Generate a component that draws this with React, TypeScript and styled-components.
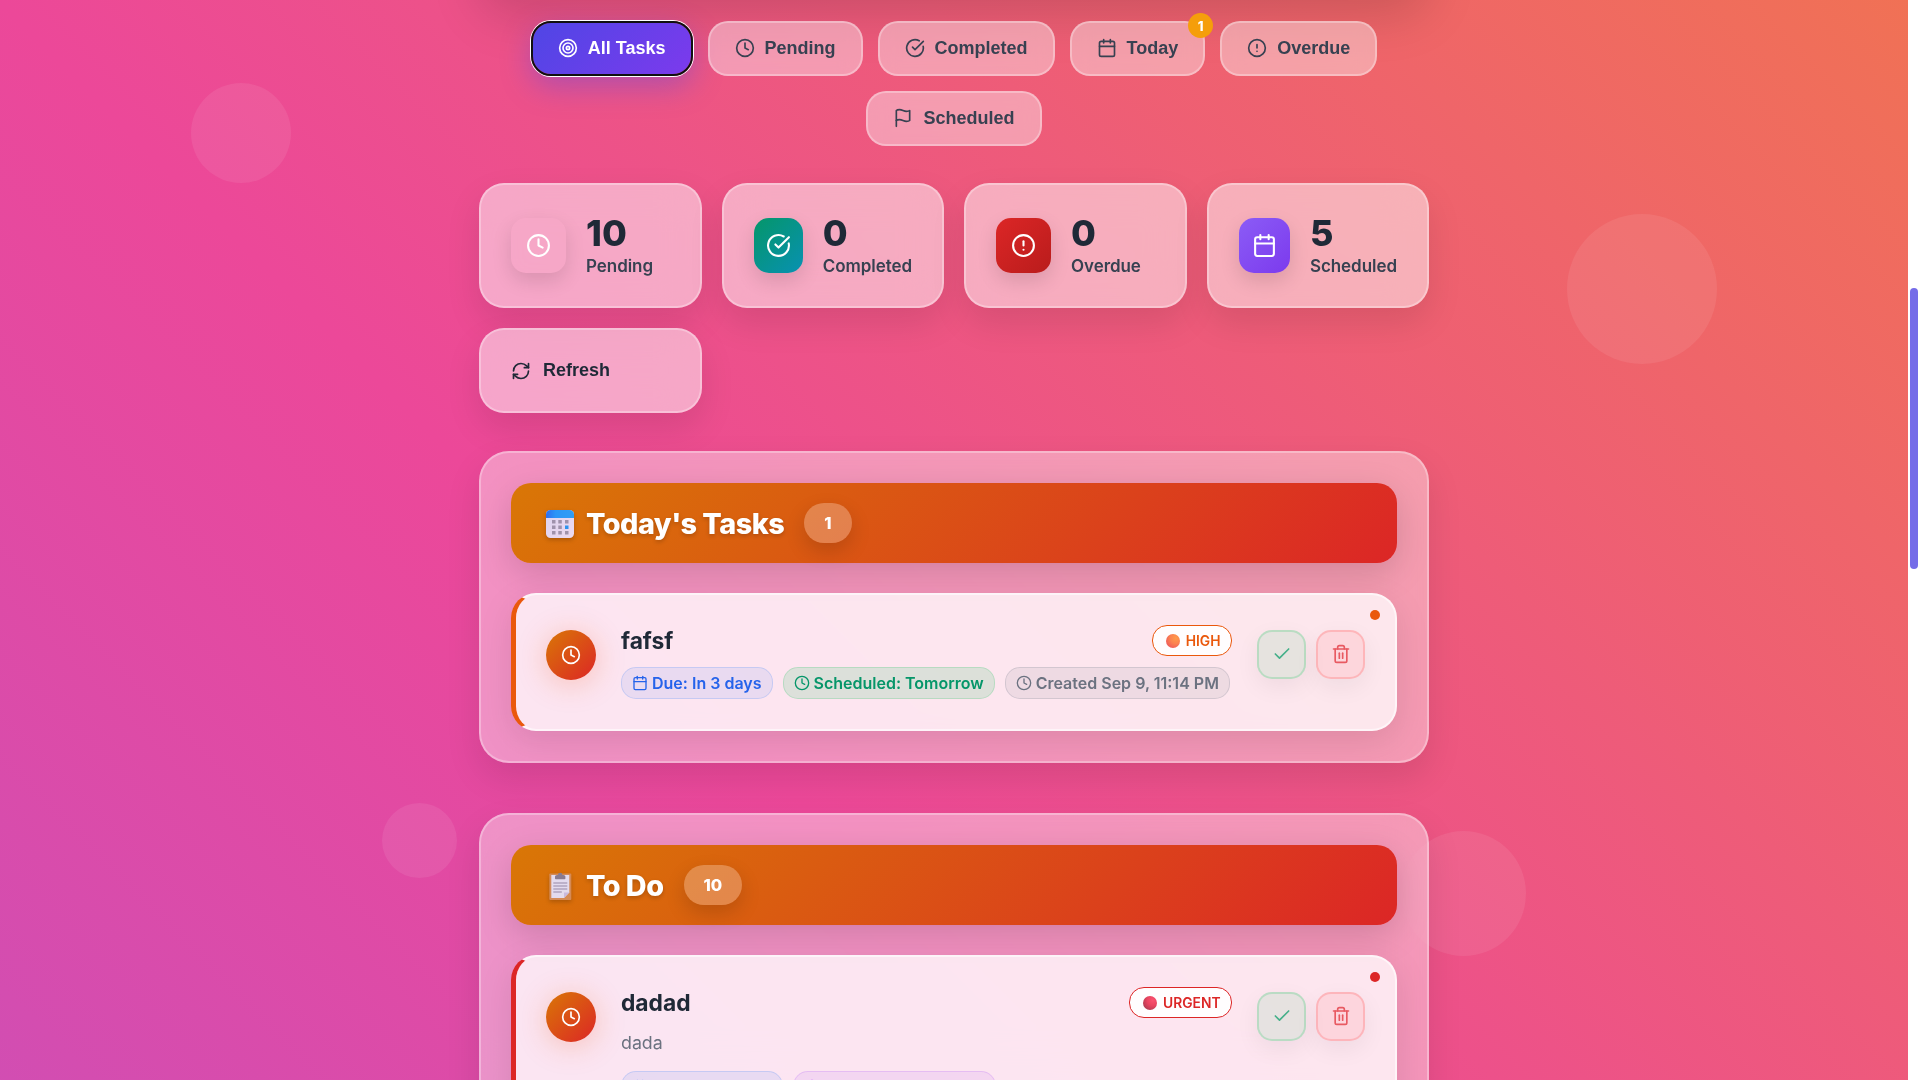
import React from "react";
import styled, { createGlobalStyle, css } from "styled-components";
import {
  Calendar,
  Check,
  CircleAlert,
  CircleCheckBig,
  Clock,
  RefreshCw,
  Target,
  Trash2,
} from "lucide-react";

const GlobalStyle = createGlobalStyle`
  *, *::before, *::after { box-sizing: border-box; }
  html, body { margin: 0; padding: 0; height: 1080px; overflow: hidden; background: #fff; }
  body { font-family: Inter, "Noto Sans", sans-serif; line-height: 1.6; color: #1f2937; }
  svg { display: block; flex: none; }
`;

const Viewport = styled.div`
  display: grid;
  grid-template-columns: 1fr 12px;
  width: 1920px;
  height: 1080px;
  overflow: hidden;
`;

const Scene = styled.div`
  position: relative;
  height: 1080px;
  overflow: hidden;
  display: flex;
  justify-content: center;
  background: linear-gradient(
    45deg,
    #8b5cf6 -97.2%,
    #ec4899 36.1%,
    #f59e0b 169.5%
  );
`;

const Bubble = styled.div<{ $x: number; $y: number; $size: number }>`
  position: absolute;
  left: ${(p) => p.$x}px;
  top: ${(p) => p.$y}px;
  width: ${(p) => p.$size}px;
  height: ${(p) => p.$size}px;
  border-radius: 50%;
  background: rgba(255, 255, 255, 0.08);
`;

const Container = styled.main`
  position: relative;
  width: 950px;
  display: flex;
  flex-direction: column;
`;

const FormPanel = styled.div`
  flex: none;
  height: 160px;
  margin-top: -169px;
  margin-bottom: 30px;
  border-radius: 30px;
  box-shadow: 0 25px 50px rgba(0, 0, 0, 0.15);
`;

const Filters = styled.nav`
  display: flex;
  flex-wrap: wrap;
  justify-content: center;
  gap: 15px;
  padding: 0 30px;
  margin-bottom: 37px;
`;

const FilterButton = styled.button<{ $active?: boolean }>`
  position: relative;
  display: flex;
  align-items: center;
  gap: 10px;
  height: 55px;
  padding: 0 25px 1px;
  border: 2px solid rgba(255, 255, 255, 0.3);
  border-radius: 20px;
  background: rgba(255, 255, 255, 0.4);
  backdrop-filter: blur(10px);
  font: 600 18px "Liberation Sans", Arial, sans-serif;
  color: #374151;
  white-space: nowrap;
  ${(p) =>
    p.$active &&
    css`
      border-color: #101010;
      background: linear-gradient(135deg, #4f46e5, #7c3aed) padding-box;
      box-shadow: 0 0 0 1px #fff, 0 10px 30px rgba(79, 70, 229, 0.4);
      color: #fff;
    `}
`;

const FilterCount = styled.span`
  position: absolute;
  top: -10px;
  right: -10px;
  width: 25px;
  height: 25px;
  display: flex;
  align-items: center;
  justify-content: center;
  border-radius: 50%;
  background: #f59e0b;
  font: 800 13px Inter, "Noto Sans", sans-serif;
  color: #fff;
`;

const Stats = styled.section`
  display: grid;
  grid-template-columns: 223px 222px 223px 222px;
  gap: 20px;
  margin-bottom: 38px;
`;

const glass = css`
  border: 2px solid rgba(255, 255, 255, 0.3);
  box-shadow: 0 15px 35px rgba(0, 0, 0, 0.1);
  backdrop-filter: blur(20px);
`;

const StatCard = styled.div`
  ${glass}
  display: flex;
  align-items: center;
  gap: 20px;
  height: 125px;
  padding: 0 30px;
  border-radius: 25px;
  background: rgba(255, 255, 255, 0.5);
`;

const StatIcon = styled.div<{ $bg: string }>`
  width: 55px;
  height: 55px;
  flex-shrink: 1;
  display: flex;
  align-items: center;
  justify-content: center;
  border-radius: 15px;
  background: ${(p) => p.$bg};
  box-shadow: 0 8px 20px rgba(0, 0, 0, 0.12);
  color: #fff;
`;

const StatText = styled.div`
  flex: none;
  padding-top: 5px;
`;

const StatNumber = styled.div`
  margin-bottom: 1.5px;
  font-size: 36px;
  font-weight: 800;
  line-height: 35.2px;
  color: #1f2937;
`;

const StatLabel = styled.div`
  font-size: 17px;
  font-weight: 600;
  line-height: 28px;
  letter-spacing: -0.05px;
  color: #374151;
`;

const RefreshButton = styled.button`
  ${glass}
  display: flex;
  align-items: center;
  gap: 12px;
  height: 85px;
  padding: 0 30px;
  border-radius: 25px;
  background: rgba(255, 255, 255, 0.5);
  font: 600 18px "Liberation Sans", Arial, sans-serif;
  color: #1f2937;
`;

const Section = styled.section`
  ${glass}
  padding: 30px;
  margin-bottom: 50px;
  border-radius: 30px;
  background: rgba(255, 255, 255, 0.4);
`;

const SectionHeader = styled.header`
  display: flex;
  align-items: center;
  gap: 20px;
  height: 80px;
  padding: 0 35px;
  margin-bottom: 30px;
  border-radius: 20px;
  background: linear-gradient(135deg, #d97706, #dc2626);
  box-shadow: 0 10px 35px rgba(0, 0, 0, 0.15);
`;

const SectionTitle = styled.h2`
  display: flex;
  align-items: center;
  gap: 12px;
  margin: 0;
  padding-top: 2px;
  font-size: 28.8px;
  font-weight: 800;
  letter-spacing: -0.5px;
  color: #fff;
  text-shadow: 0 2px 4px rgba(0, 0, 0, 0.2);
  svg {
    filter: drop-shadow(0 2px 2px rgba(0, 0, 0, 0.2));
  }
`;

const SectionCount = styled.span`
  display: flex;
  align-items: center;
  height: 40px;
  padding: 0 20px;
  border-radius: 20px;
  background: rgba(255, 255, 255, 0.25);
  box-shadow: 0 8px 20px rgba(0, 0, 0, 0.15);
  font-size: 16.5px;
  font-weight: 800;
  color: #fff;
`;

const TaskCard = styled.article<{ $accent: string; $height: number }>`
  position: relative;
  display: flex;
  align-items: flex-start;
  gap: 25px;
  height: ${(p) => p.$height}px;
  padding: 30px;
  border: 2px solid rgba(255, 255, 255, 0.6);
  border-left: 5px solid ${(p) => p.$accent};
  border-radius: 25px;
  background: rgba(255, 255, 255, 0.77);
  box-shadow: 0 10px 35px rgba(0, 0, 0, 0.1);
`;

const AccentDot = styled.span<{ $accent: string }>`
  position: absolute;
  top: 15px;
  right: 15px;
  width: 10px;
  height: 10px;
  border-radius: 50%;
  background: ${(p) => p.$accent};
`;

const StatusCircle = styled.div`
  flex: none;
  width: 50px;
  height: 50px;
  margin-top: 5px;
  display: flex;
  align-items: center;
  justify-content: center;
  border-radius: 50%;
  background: linear-gradient(135deg, #d97706, #dc2626);
  box-shadow: 0 4px 30px rgba(234, 88, 12, 0.26);
  color: #fff;
`;

const TaskBody = styled.div`
  flex: 1;
  min-width: 0;
`;

const TitleRow = styled.div`
  display: flex;
  justify-content: space-between;
  height: 31px;
  margin-bottom: 11px;
`;

const TaskTitle = styled.h3`
  margin: 0;
  font-size: 22.8px;
  font-weight: 700;
  line-height: 31px;
  color: #1f2937;
`;

const PriorityBadge = styled.span<{ $accent: string }>`
  display: flex;
  align-items: center;
  gap: 6px;
  height: 31px;
  padding: 1px 10.5px 0 13px;
  border: 1px solid ${(p) => p.$accent};
  border-radius: 15px;
  background: rgba(255, 255, 255, 0.95);
  font-size: 13.8px;
  font-weight: 600;
  color: ${(p) => p.$accent};
`;

const Description = styled.p`
  margin: 0 0 15px;
  font-size: 17.8px;
  line-height: 27px;
  color: #6b7280;
`;

const Chips = styled.div`
  display: flex;
  gap: 10px;
`;

const Chip = styled.span<{ $rgb: string; $color?: string; $fill?: number; $width?: number }>`
  display: flex;
  align-items: center;
  gap: 4px;
  width: ${(p) => (p.$width ? `${p.$width}px` : "auto")};
  height: 32px;
  padding: 1px 10px 0;
  border: 1px solid rgba(${(p) => p.$rgb}, 0.2);
  border-radius: 15px;
  background: rgba(${(p) => p.$rgb}, ${(p) => p.$fill ?? 0.1});
  font-size: 16px;
  font-weight: 600;
  color: ${(p) => p.$color ?? `rgb(${p.$rgb})`};
  white-space: nowrap;
  svg {
    margin-bottom: 2px;
  }
`;

const Actions = styled.div`
  display: flex;
  gap: 10px;
  margin-top: 5px;
`;

const ActionButton = styled.button<{ $rgb: string; $color: string }>`
  width: 49px;
  height: 49px;
  padding: 0 0 1px;
  display: flex;
  align-items: center;
  justify-content: center;
  border: 2px solid rgba(${(p) => p.$rgb}, 0.22);
  border-radius: 15px;
  background: rgba(${(p) => p.$rgb}, 0.1);
  box-shadow: 0 8px 25px rgba(0, 0, 0, 0.06);
  color: ${(p) => p.$color};
`;

const ScrollTrack = styled.div`
  height: 1080px;
  padding: 288px 2px 0;
  background: #fff;
`;

const ScrollThumb = styled.div`
  height: 281px;
  border-radius: 4px;
  background: #756ce8;
`;

const FlagIcon = () => (
  <svg width="20" height="20" viewBox="0 0 24 24" fill="none" stroke="currentColor" strokeWidth="2" strokeLinecap="round" strokeLinejoin="round">
    <path d="M4 15s1-1 4-1 5 2 8 2 4-1 4-1V3s-1 1-4 1-5-2-8-2-4 1-4 1z" />
    <line x1="4" x2="4" y1="22" y2="15" />
  </svg>
);

const CalendarEmoji = () => (
  <svg width="28" height="28" viewBox="0 0 28 28">
    <defs>
      <linearGradient id="calTop" x1="0" x2="1" y1="0" y2="0">
        <stop offset="0" stopColor="#2f6df0" />
        <stop offset="0.35" stopColor="#2b95f7" />
        <stop offset="1" stopColor="#2f9df5" />
      </linearGradient>
      <linearGradient id="calBody" x1="0" x2="1" y1="0" y2="1">
        <stop offset="0" stopColor="#dcd3ef" />
        <stop offset="1" stopColor="#ecd9f0" />
      </linearGradient>
    </defs>
    <rect width="28" height="28" rx="4.5" fill="url(#calBody)" />
    <path d="M0 8V4.500A4.500 4.500 0 0 1 4.500 0h19A4.500 4.500 0 0 1 28 4.500V8z" fill="url(#calTop)" />
    {[10, 15.5, 21].map((y, row) =>
      [6, 12.3, 19].map((x, col) => (
        <rect key={`${x}-${y}`} x={x} y={y} width="3.5" height="3.5" fill={row === 1 && col === 2 ? "#2e93ee" : "#9f92ac"} />
      ))
    )}
  </svg>
);

const ClipboardEmoji = () => (
  <svg width="28" height="28" viewBox="0 0 28 28">
    <rect x="3.3" y="1.5" width="22" height="26.5" rx="1" fill="#d58a55" />
    <path d="M5.300 3H23.300V20.500L18 26H5.300z" fill="#e3dbee" />
    <path d="M23.300 20.500H18V26z" fill="#c9b9de" />
    <path d="M9 6.500V4.500Q9 3 11 3h1a2.200 2.200 0 0 1 4.400 0h1q2 0 2 1.500v2q0 .8-.8.800H9.800Q9 7.300 9 6.500z" fill="#897b90" />
    <path d="M7.300 11h14M7.300 14h14M7.300 17h14M7.300 20h8.500" stroke="#9587a5" strokeWidth="1" />
  </svg>
);

const DotEmoji = ({ kind }: { kind: "high" | "urgent" }) => (
  <svg width="14" height="14" viewBox="0 0 14 14">
    <defs>
      <radialGradient id={`dot-${kind}`} cx="0.7" cy="0.3" r="0.8">
        <stop offset="0" stopColor={kind === "high" ? "#ff9a4a" : "#fb5270"} />
        <stop offset="0.5" stopColor={kind === "high" ? "#fb8250" : "#e94460"} />
        <stop offset="1" stopColor={kind === "high" ? "#ef5a5a" : "#b03a50"} />
      </radialGradient>
    </defs>
    <circle cx="7" cy="7" r="7" fill={`url(#dot-${kind})`} />
  </svg>
);

const stats = [
  { n: 10, label: "Pending", bg: "transparent", Icon: Clock },
  { n: 0, label: "Completed", bg: "linear-gradient(135deg, #059669, #0891b2)", Icon: CircleCheckBig },
  { n: 0, label: "Overdue", bg: "linear-gradient(135deg, #dc2626, #b91c1c)", Icon: CircleAlert },
  { n: 5, label: "Scheduled", bg: "linear-gradient(135deg, #8b5cf6, #7c3aed)", Icon: Calendar },
];

const TaskActions = () => (
  <Actions>
    <ActionButton $rgb="34, 197, 94" $color="#46b08a"><Check size={20} /></ActionButton>
    <ActionButton $rgb="255, 68, 68" $color="#e85a62"><Trash2 size={20} /></ActionButton>
  </Actions>
);

export default function App() {
  return (
    <Viewport>
      <GlobalStyle />
      <Scene>
        <Bubble $x={191} $y={83} $size={100} />
        <Bubble $x={1567} $y={214} $size={150} />
        <Bubble $x={382} $y={803} $size={75} />
        <Bubble $x={1401} $y={831} $size={125} />
        <Container>
          <FormPanel />
          <Filters>
            <FilterButton $active><Target size={20} />All Tasks</FilterButton>
            <FilterButton><Clock size={20} />Pending</FilterButton>
            <FilterButton><CircleCheckBig size={20} />Completed</FilterButton>
            <FilterButton><Calendar size={20} />Today<FilterCount>1</FilterCount></FilterButton>
            <FilterButton><CircleAlert size={20} />Overdue</FilterButton>
            <FilterButton><FlagIcon />Scheduled</FilterButton>
          </Filters>
          <Stats>
            {stats.map(({ n, label, bg, Icon }) => (
              <StatCard key={label}>
                <StatIcon $bg={bg}><Icon size={25} /></StatIcon>
                <StatText>
                  <StatNumber>{n}</StatNumber>
                  <StatLabel>{label}</StatLabel>
                </StatText>
              </StatCard>
            ))}
            <RefreshButton><RefreshCw size={20} />Refresh</RefreshButton>
          </Stats>
          <Section>
            <SectionHeader>
              <SectionTitle><CalendarEmoji />Today's Tasks</SectionTitle>
              <SectionCount>1</SectionCount>
            </SectionHeader>
            <TaskCard $accent="#ea580c" $height={138}>
              <AccentDot $accent="#ea580c" />
              <StatusCircle><Clock size={20} /></StatusCircle>
              <TaskBody>
                <TitleRow>
                  <TaskTitle>fafsf</TaskTitle>
                  <PriorityBadge $accent="#ea580c"><DotEmoji kind="high" />HIGH</PriorityBadge>
                </TitleRow>
                <Chips>
                  <Chip $rgb="59, 130, 246" $color="#2563eb"><Calendar size={16} />Due: In 3 days</Chip>
                  <Chip $rgb="34, 197, 94" $color="#059669" $fill={0.15}><Clock size={16} />Scheduled: Tomorrow</Chip>
                  <Chip $rgb="107, 114, 128"><Clock size={16} />Created Sep 9, 11:14 PM</Chip>
                </Chips>
              </TaskBody>
              <TaskActions />
            </TaskCard>
          </Section>
          <Section>
            <SectionHeader>
              <SectionTitle><ClipboardEmoji />To Do</SectionTitle>
              <SectionCount>10</SectionCount>
            </SectionHeader>
            <TaskCard $accent="#dc2626" $height={180}>
              <AccentDot $accent="#dc2626" />
              <StatusCircle><Clock size={20} /></StatusCircle>
              <TaskBody>
                <TitleRow>
                  <TaskTitle>dadad</TaskTitle>
                  <PriorityBadge $accent="#dc2626"><DotEmoji kind="urgent" />URGENT</PriorityBadge>
                </TitleRow>
                <Description>dada</Description>
                <Chips>
                  <Chip $rgb="59, 130, 246" $width={162}><Calendar size={16} /></Chip>
                  <Chip $rgb="168, 85, 247" $width={203}><Clock size={16} /></Chip>
                </Chips>
              </TaskBody>
              <TaskActions />
            </TaskCard>
          </Section>
        </Container>
      </Scene>
      <ScrollTrack>
        <ScrollThumb />
      </ScrollTrack>
    </Viewport>
  );
}
